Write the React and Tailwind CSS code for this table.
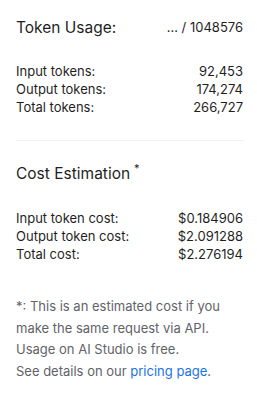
export default function App() {
  const tokens = [
    ["Input tokens:", "92,453"],
    ["Output tokens:", "174,274"],
    ["Total tokens:", "266,727"],
  ];
  const costs = [
    ["Input token cost:", "$0.184906"],
    ["Output token cost:", "$2.091288"],
    ["Total cost:", "$2.276194"],
  ];
  return (
    <div className="w-[257px] h-[395px] bg-white pl-4 pr-[14px] pt-[18px] text-[#1f1f1f]" style={{ fontFamily: "Inter, sans-serif" }}>
      <div className="flex items-center justify-between">
        <span className="text-[15.5px] leading-[20px]">Token Usage:</span>
        <span className="text-[13px]">... / 1048576</span>
      </div>
      <div className="mt-[24px] flex flex-col">
        {tokens.map(([k, v]) => (
          <div key={k} className="flex justify-between text-[13px] leading-[18px]">
            <span>{k}</span>
            <span>{v}</span>
          </div>
        ))}
      </div>
      <div className="mt-[24px] mr-[-2px] border-t border-[#f0f0f0]" />
      <div className="mt-[23px] flex items-start">
        <span className="text-[15.5px] leading-[20px]">Cost Estimation</span>
        <span className="ml-[4px] -mt-[4px] text-[11px]">*</span>
      </div>
      <div className="mt-[25px] flex flex-col">
        {costs.map(([k, v]) => (
          <div key={k} className="flex justify-between text-[13px] leading-[18px]">
            <span>{k}</span>
            <span>{v}</span>
          </div>
        ))}
      </div>
      <p className="mt-[33px] text-[13px] leading-[21.5px] text-[#5f6368]">
        *: This is an estimated cost if you make the same request via API. Usage on AI Studio is free.
        <br />
        See details on our <span className="text-[#1a73e8]">pricing page</span>.
      </p>
    </div>
  );
}
